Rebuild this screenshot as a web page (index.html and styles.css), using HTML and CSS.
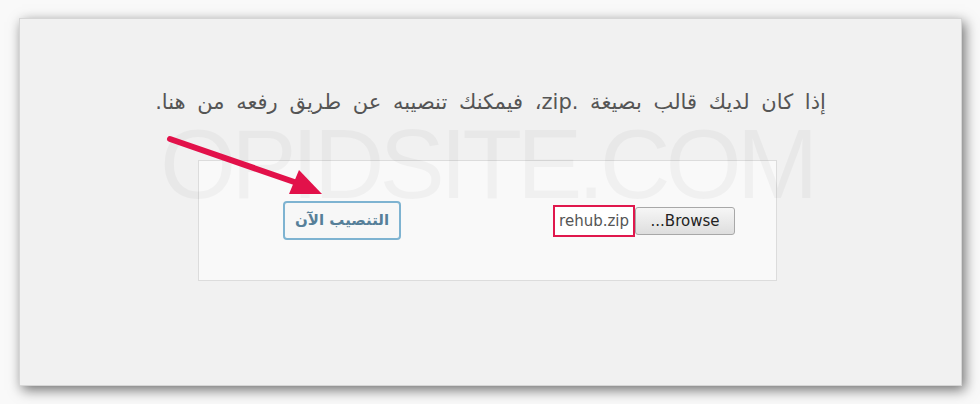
FILE: index.html
```html
<!DOCTYPE html>
<html lang="ar" dir="rtl">
<head>
    <meta charset="UTF-8">
    <meta name="viewport" content="width=device-width, initial-scale=1.0">
    <title>رفع قالب</title>
    <link rel="stylesheet" href="styles.css">
</head>
<body>
    <div class="panel">
        <p class="intro">إذا كان لديك قالب بصيغة .zip، فيمكنك تنصيبه عن طريق رفعه من هنا.</p>

        <form class="upload-box">
            <div class="file-group">
                <span class="browse-btn">Browse...</span>
                <span class="file-name" dir="ltr">rehub.zip</span>
            </div>
            <button type="button" class="install-btn">التنصيب الآن</button>
        </form>

        <div class="watermark" dir="ltr">OPIDSITE.COM</div>

        <svg class="arrow" width="200" height="80" viewBox="0 0 200 80">
            <line x1="8" y1="8" x2="138" y2="53" stroke="#e2114a" stroke-width="6" stroke-linecap="round"/>
            <polygon points="160,63 127,63 137,39" fill="#e2114a"/>
        </svg>
    </div>
</body>
</html>
```
FILE: styles.css
```css
body {
    margin: 0;
    padding: 18px;
    background-color: #f9f9f9;
    font-family: "DejaVu Sans", "Noto Sans", sans-serif;
}

.panel {
    position: relative;
    width: 943px;
    height: 368px;
    box-sizing: border-box;
    background-color: #f1f1f1;
    border: 1px solid #d6d6d6;
    box-shadow: 3px 4px 12px rgba(0, 0, 0, 0.55);
    overflow: hidden;
}

.intro {
    margin: 71px 0 0;
    text-align: center;
    font-size: 21px;
    word-spacing: 5px;
    color: #555;
}

.upload-box {
    display: flex;
    align-items: center;
    justify-content: space-between;
    width: 579px;
    height: 121px;
    box-sizing: border-box;
    margin: 46px 184px 0 0;
    padding: 0 41px 0 84px;
    background-color: #f9f9f9;
    border: 1px solid #dcdcdc;
}

.file-group {
    display: flex;
    align-items: center;
}

.file-name {
    display: flex;
    align-items: center;
    height: 32px;
    padding: 0 4px;
    box-sizing: border-box;
    border: 2px solid #e0184d;
    background-color: #fff;
    font-size: 15px;
    color: #555;
}

.browse-btn {
    display: flex;
    align-items: center;
    justify-content: center;
    width: 100px;
    height: 28px;
    box-sizing: border-box;
    border: 1px solid #a8a8a8;
    border-radius: 3px;
    background: linear-gradient(#f6f6f6, #dedede);
    font-size: 15px;
    color: #222;
}

.install-btn {
    width: 118px;
    height: 39px;
    border: 2px solid #7eb3d1;
    border-radius: 4px;
    background-color: #f7f7f7;
    font-family: inherit;
    font-size: 15px;
    font-weight: bold;
    color: #567f99;
    margin-top: -1px;
}

.watermark {
    position: absolute;
    left: 140px;
    top: 89px;
    font-family: "Liberation Sans", sans-serif;
    font-size: 98px;
    letter-spacing: -5px;
    color: rgba(0, 0, 0, 0.035);
    pointer-events: none;
    white-space: nowrap;
}

.arrow {
    position: absolute;
    left: 142px;
    top: 112px;
}
```
